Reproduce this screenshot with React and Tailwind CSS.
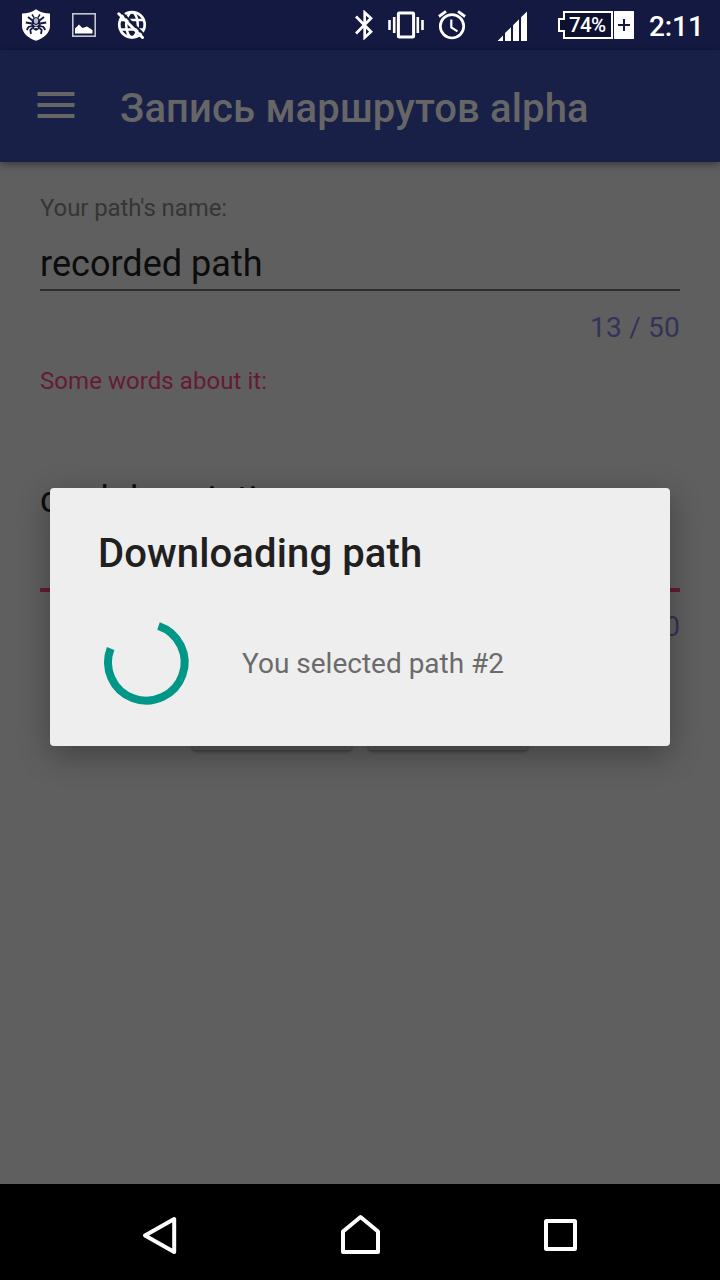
import React from "react";

function ShieldIcon() {
  return (
    <svg className="h-8 w-7" viewBox="0 0 28 32">
      <path fill="#fff" d="M14 0.3 C10 3.4 5 4.6 0 4.6 V17 C0 24 6 29 14 31.8 C22 29 28 24 28 17 V4.6 C23 4.600 18 3.400 14 0.300Z" />
      <g stroke="#131940" fill="none" strokeWidth="1.8">
        <path d="M10.5 11.500 L6 8 M17.500 11.500 L22 8" />
        <path d="M12 8.500 L10 5.500 M16 8.500 L18 5.500" strokeWidth="1.400" />
        <path d="M9.800 14.500 L3.800 13.500 M18.200 14.500 L24.200 13.500" />
        <path d="M10 17 L6.500 18 L4.800 21 M18 17 L21.500 18 L23.200 21" />
        <path d="M10.500 19 L8.300 21 L9 25 M17.500 19 L19.700 21 L19 25" />
      </g>
      <path d="M10.500 10 Q14 6 17.500 10 L18.700 15 Q18.700 20 14 21.800 Q9.300 20 9.300 15Z" fill="#131940" />
      <path d="M11.800 10.500 L14 8.600 L16.200 10.500 L16 13.500 L14 15.200 L12 13.500Z" fill="#b4b7c4" />
      <path d="M11.500 15.500 L14 17 L16.500 15.500 M12 19 Q14 17.600 16 19" stroke="#fff" fill="none" strokeWidth="1" />
    </svg>
  );
}

function PictureIcon() {
  return (
    <svg className="h-6 w-6" viewBox="0 0 24 24">
      <rect x="0.800" y="0.800" width="22.400" height="22.400" fill="none" stroke="#c4c6cf" strokeWidth="1.600" />
      <path fill="#fff" d="M3 20.500 V15.500 L7 11.500 L10.500 15 L15 13.500 L20.500 17 V20.500Z" />
    </svg>
  );
}

function NoGlobeIcon() {
  return (
    <svg className="h-[30px] w-[30px]" viewBox="0 0 30 30">
      <circle cx="15" cy="14.800" r="12.700" fill="none" stroke="#fff" strokeWidth="2.700" />
      <g fill="none" stroke="#fff" strokeWidth="2.500">
        <ellipse cx="15" cy="14.800" rx="5.800" ry="12.500" />
        <path d="M3 10 H27 M3 19.500 H27" />
      </g>
      <path d="M4 1.500 L28.500 26" stroke="#131940" strokeWidth="2.200" />
      <path d="M1.800 3.800 L25.500 27.500" stroke="#fff" strokeWidth="3" strokeLinecap="round" />
    </svg>
  );
}

function BluetoothIcon() {
  return (
    <svg className="h-[30px] w-[18px]" viewBox="0 0 18 30">
      <path d="M1 6.500 L16 21.700 L9.700 27.500 V2.500 L16 8.300 L1 23.500" fill="none" stroke="#fff" strokeWidth="2.700" />
    </svg>
  );
}

function VibrateIcon() {
  return (
    <svg className="h-[28px] w-9" viewBox="0 0 36 28">
      <rect x="10.400" y="1.900" width="15.200" height="24.200" rx="1" fill="none" stroke="#fff" strokeWidth="3" />
      <path d="M1.500 9 V19 M34.500 9 V19 M6.200 6 V22 M29.800 6 V22" stroke="#fff" strokeWidth="2.600" />
    </svg>
  );
}

function AlarmIcon() {
  return (
    <svg className="h-[30px] w-7" viewBox="0 0 28 30">
      <circle cx="14" cy="16.300" r="11.700" fill="none" stroke="#fff" strokeWidth="2.700" />
      <path d="M0.900 6.500 L8 1.300 M27.100 6.500 L20 1.300" stroke="#fff" strokeWidth="2.800" />
      <path d="M13.300 9.500 V17.300 L19.500 21.300" fill="none" stroke="#fff" strokeWidth="2.200" />
    </svg>
  );
}

function SignalIcon() {
  return (
    <svg className="h-[30px] w-[31px]" viewBox="0 0 31 30">
      <path fill="#fff" d="M0.500 30 L6 24.500 V30Z M8 30 V22 L14 16.300 V30Z M16 30 V14.300 L22 8.300 V30Z M24 30 V6.300 L30 0.500 V30Z" />
    </svg>
  );
}

function Battery() {
  return (
    <div className="relative h-7 w-[76px]">
      <svg className="h-7 w-[76px]" viewBox="0 0 76 28">
        <path d="M6 1 H54 V27 H6 V20 H1 V8 H6Z" fill="#0c1130" stroke="#fff" strokeWidth="2" />
        <rect x="56" width="20" height="28" rx="0.500" fill="#fff" />
        <path d="M60 14 H72 M66 8 V20" stroke="#131940" strokeWidth="2" />
      </svg>
      <span className="absolute left-[11px] top-[3px] whitespace-nowrap text-[20.5px] font-medium leading-[22px] tracking-[-0.6px]">74%</span>
    </div>
  );
}

function StatusBar() {
  return (
    <div className="flex h-[50px] shrink-0 items-start bg-[#131940] pl-[22px] text-white">
      <div className="mt-[9px]"><ShieldIcon /></div>
      <div className="ml-[22px] mt-[13px]"><PictureIcon /></div>
      <div className="ml-[21px] mt-[10px]"><NoGlobeIcon /></div>
      <div className="ml-[208px] mt-[10px]"><BluetoothIcon /></div>
      <div className="ml-[15px] mt-[11px]"><VibrateIcon /></div>
      <div className="ml-[14px] mt-[10px]"><AlarmIcon /></div>
      <div className="ml-[31px] mt-[11px]"><SignalIcon /></div>
      <div className="ml-[30px] mt-[11px]"><Battery /></div>
      <div className="ml-[15px] mt-[10px] whitespace-nowrap text-[28px] font-medium leading-[34px] tracking-[-0.1px]">2:11</div>
    </div>
  );
}

function AppBar() {
  return (
    <header className="flex h-[112px] shrink-0 items-start bg-[#192048] pl-[37px] text-[#666666] shadow-[0_2px_8px_rgba(0,0,0,0.45)]">
      <svg className="mt-[42px] h-[26px] w-[38px]" viewBox="0 0 38 26">
        <path d="M0.500 2 H37.500 M0.500 13 H37.500 M0.500 24 H37.500" stroke="#666666" strokeWidth="4" />
      </svg>
      <h1 className="ml-[45px] mt-[35px] whitespace-nowrap text-[40px] font-medium leading-[48px] tracking-[0.14px]">Запись маршрутов alpha</h1>
    </header>
  );
}

function PathForm() {
  return (
    <main className="flex grow flex-col bg-[#5f5f5f] px-10 pt-[31px]">
      <label className="text-[24px] leading-[30px] tracking-[-0.09px] text-[#353535]">Your path's name:</label>
      <div className="mt-[18px] h-[50px] border-b-2 border-[#2d2d2d] text-[36px] leading-[46px] tracking-[0.03px] text-[#0c0c0c]">recorded path</div>
      <div className="mt-[20px] text-right text-[28px] leading-[34px] text-[#33335a]"><span className="tracking-[0.22px]">13 / 50</span></div>
      <label className="mt-[21px] text-[24px] leading-[30px] tracking-[0.06px] text-[#661a34]">Some words about it:</label>
      <div className="mt-[82px] h-[114px] border-b-4 border-[#661a34] text-[36px] leading-[44px] tracking-[0.09px] text-[#0c0c0c]">cool description</div>
      <div className="mt-[18px] text-right text-[28px] leading-[34px] text-[#33335a]">16 / 500</div>
      <div className="mt-[12px] flex justify-center gap-4">
        <div className="h-[94px] w-40 rounded bg-[#565656] shadow-[0_2px_3px_rgba(0,0,0,0.3)]" />
        <div className="h-[94px] w-40 rounded bg-[#565656] shadow-[0_2px_3px_rgba(0,0,0,0.3)]" />
      </div>
    </main>
  );
}

function ProgressDialog() {
  return (
    <section role="dialog" className="absolute left-[50px] top-[488px] z-20 h-[258px] w-[620px] rounded bg-[#eeeeee] pl-12 pt-[42px] shadow-[0_9px_32px_rgba(0,0,0,0.32)]">
      <h2 className="text-[40px] font-medium leading-[48px] tracking-[0.12px] text-[#202020]">Downloading path</h2>
      <div className="mt-[36px] flex items-start">
        <svg className="h-24 w-24" viewBox="0 0 96 96">
          <path d="M60.500 12 A38.300 38.300 0 1 1 12.600 34.500" fill="none" stroke="#009688" strokeWidth="8" />
        </svg>
        <p className="ml-12 mt-[33px] text-[28px] leading-[34px] text-[#6b6b6b]">You selected path #2</p>
      </div>
    </section>
  );
}

function NavigationBar() {
  return (
    <nav className="flex h-24 shrink-0 items-start bg-black pl-[142px]">
      <svg className="mt-[32px] h-[38px] w-[35px]" viewBox="0 0 35 38">
        <path d="M32.200 3 V36 L3 19.500Z" fill="none" stroke="#fff" strokeWidth="4" strokeLinejoin="round" />
      </svg>
      <svg className="ml-[163px] mt-[30px] h-10 w-10" viewBox="0 0 40 40">
        <path d="M3 38 V17.500 L20.500 3 L38 17.500 V38Z" fill="none" stroke="#fff" strokeWidth="4" strokeLinejoin="round" />
      </svg>
      <svg className="ml-[164px] mt-[35px] h-[32px] w-[33px]" viewBox="0 0 33 32">
        <rect x="2" y="2" width="29" height="28" rx="0.500" fill="none" stroke="#fff" strokeWidth="4" />
      </svg>
    </nav>
  );
}

export default function App() {
  return (
    <div className="relative flex h-[1280px] w-[720px] flex-col overflow-hidden font-[Roboto,sans-serif]">
      <StatusBar />
      <div className="relative z-10 flex flex-col"><AppBar /></div>
      <PathForm />
      <NavigationBar />
      <ProgressDialog />
    </div>
  );
}
